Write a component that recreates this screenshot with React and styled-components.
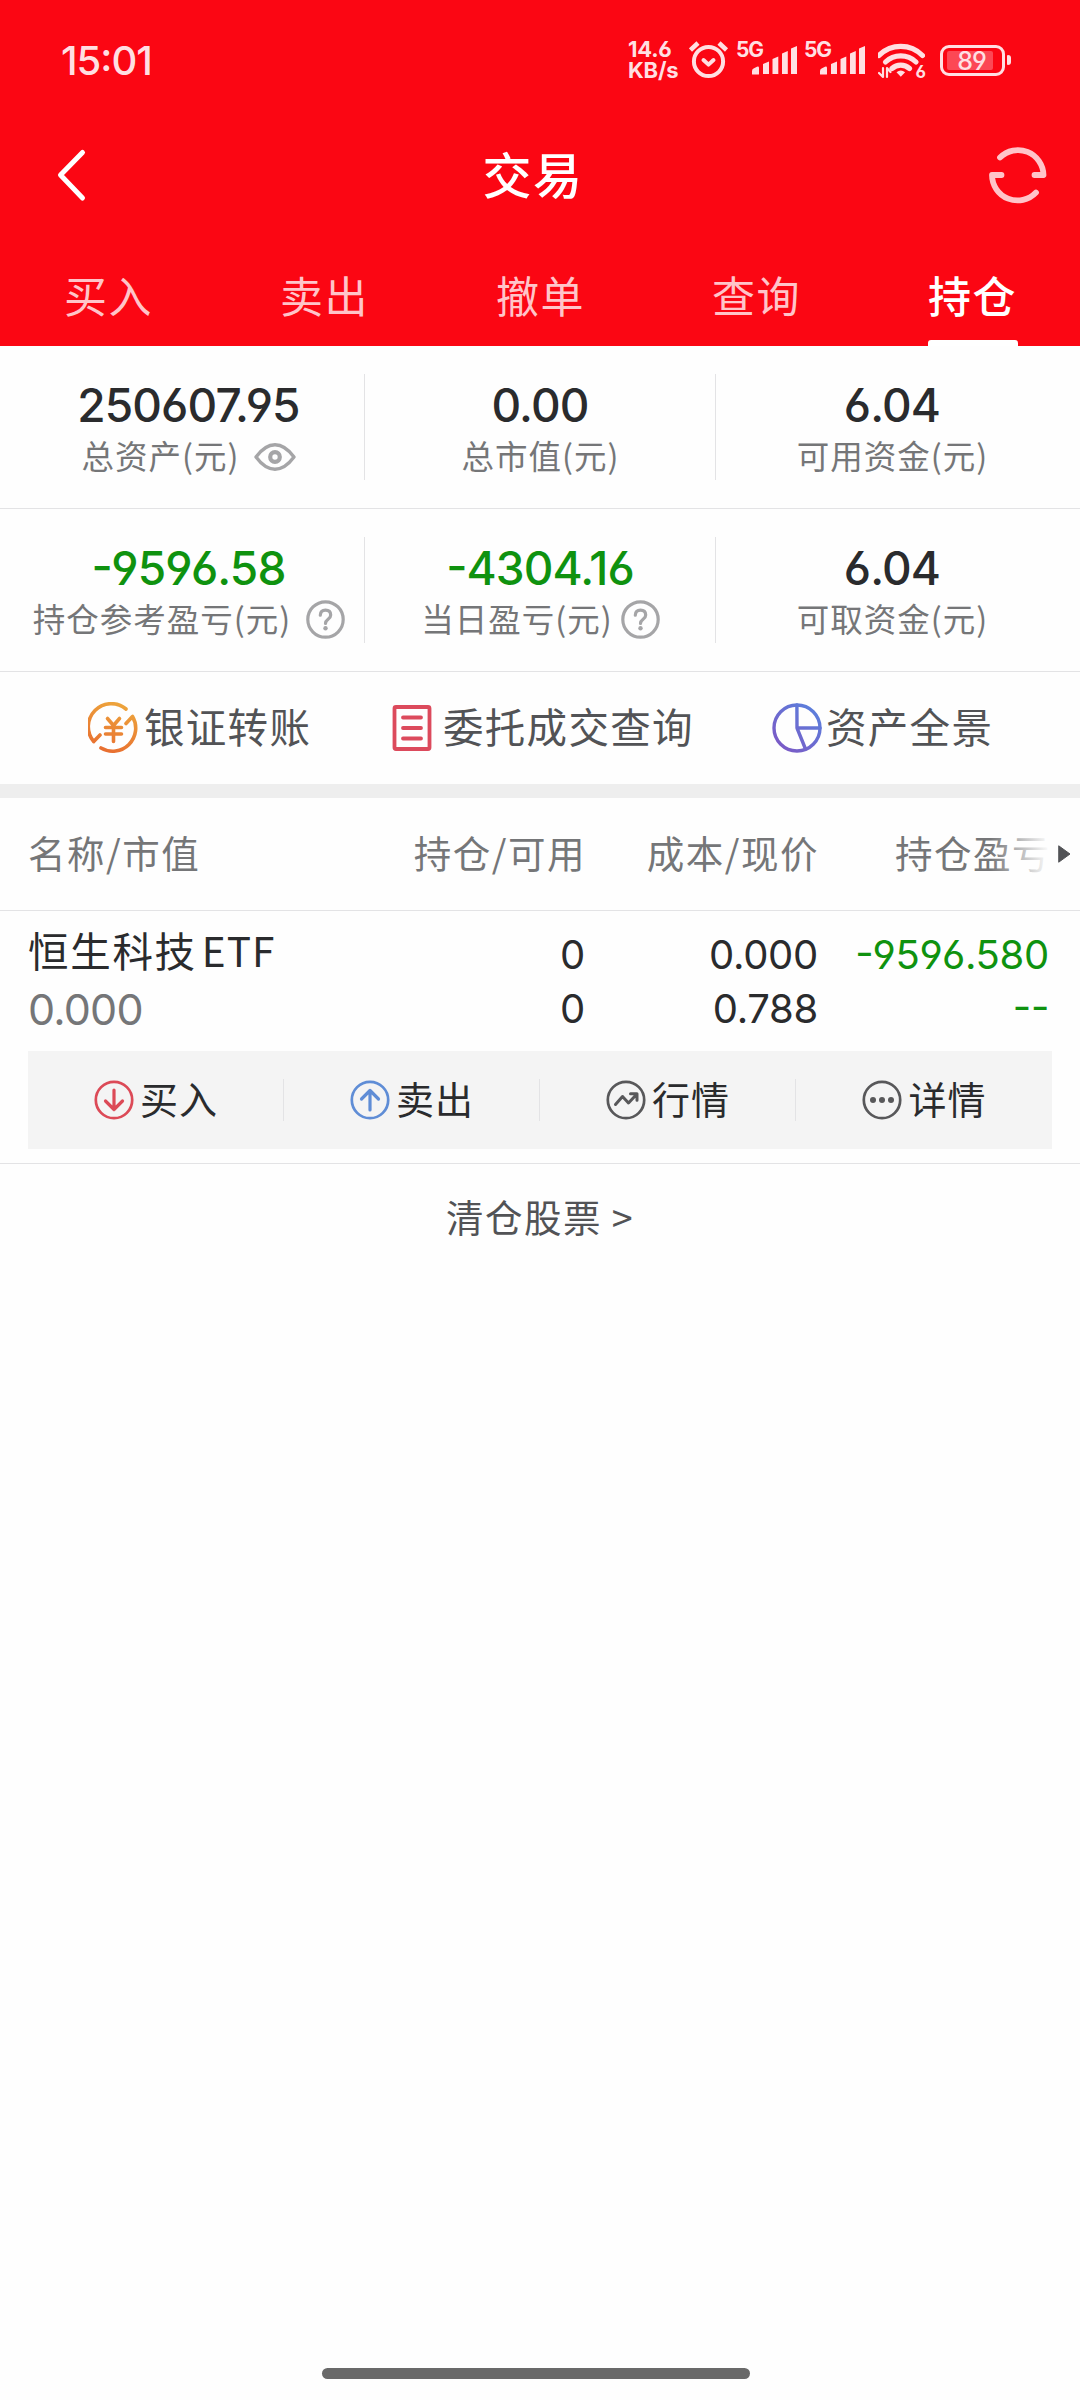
import React from 'react';
import styled, { createGlobalStyle } from 'styled-components';

const colors = {
  red: '#fb0613',
  pale: '#ffdfe2',
  rose: '#ffc4c9',
  ink: '#2a2b2d',
  dark: '#525356',
  grey: '#757678',
  icon: '#a5a5a7',
  line: '#e3e3e5',
  green: '#0f920f',
};

const GlobalStyle = createGlobalStyle`
  * {
    box-sizing: border-box;
  }
  body {
    margin: 0;
    background: #fefefe;
    font-family: 'Noto Sans CJK SC', sans-serif;
    color: ${colors.ink};
  }
  svg {
    display: block;
    flex: none;
    fill: none;
    stroke-linecap: round;
    stroke-linejoin: round;
  }
`;

const Page = styled.div`
  display: flex;
  flex-direction: column;
  width: 1080px;
  height: 2400px;
  white-space: nowrap;
`;

const Digits = styled.span`
  font-family: Inter, sans-serif;
  font-feature-settings: 'cv03', 'cv04', 'case';
`;

/* header */

const Header = styled.header`
  height: 346px;
  background: ${colors.red};
`;

const StatusBar = styled.div`
  display: flex;
  align-items: center;
  height: 120px;
  padding: 0 69px 0 61px;
  color: ${colors.pale};
  stroke: ${colors.pale};
`;

const Clock = styled(Digits)`
  flex: 1;
  font-size: 40px;
  font-weight: 500;
  letter-spacing: -1px;
`;

const NetSpeed = styled(Digits)`
  display: flex;
  flex-direction: column;
  width: 51px;
  margin-right: 10px;
  font-size: 22px;
  font-weight: 700;
  line-height: 21px;
  letter-spacing: -0.2px;
`;

const Signal = styled.div`
  position: relative;
  margin-left: ${(props) => props.$gap}px;
`;

const SignalLabel = styled(Digits)`
  position: absolute;
  top: 1px;
  left: 0;
  font-size: 21px;
  font-weight: 700;
  line-height: 17px;
  letter-spacing: -1.2px;
`;

const Wifi = styled.div`
  position: relative;
  margin: 0 15px 0 13px;
`;

const WifiLabel = styled(Digits)`
  position: absolute;
  right: -1px;
  bottom: 0;
  font-size: 17px;
  font-weight: 700;
  line-height: 15px;
`;

const Battery = styled.div`
  display: flex;
  align-items: center;
  gap: 2px;
  &::after {
    content: '';
    width: 4px;
    height: 10px;
    border-radius: 1px 3px 3px 1px;
    background: ${colors.pale};
  }
`;

const BatteryBody = styled.div`
  width: 65px;
  height: 31px;
  padding: 3px 9px 3px 4px;
  border: 3px solid ${colors.pale};
  border-radius: 9px;
`;

const BatteryLevel = styled(Digits)`
  display: block;
  height: 19px;
  padding-left: 3px;
  border-radius: 2px;
  background: #fc4855;
  font-size: 25px;
  font-weight: 500;
  line-height: 21px;
  text-align: center;
  letter-spacing: -1px;
`;

const NavBar = styled.div`
  display: flex;
  align-items: center;
  justify-content: space-between;
  height: 110px;
  padding: 0 32px 0 54px;
`;

const Title = styled.h1`
  margin: 0 12px 6px 0;
  color: #fff;
  font-size: 49px;
  font-weight: 500;
  letter-spacing: 1.5px;
`;

const Tabs = styled.nav`
  display: grid;
  grid-template-columns: repeat(5, 1fr);
  height: 116px;
`;

const Tab = styled.div`
  display: flex;
  flex-direction: column;
  align-items: center;
  justify-content: space-between;
  padding: 34px 0 0 1px;
  color: ${(props) => (props.$active ? '#fff' : colors.rose)};
  font-size: 43px;
  font-weight: ${(props) => (props.$active ? 500 : 400)};
  line-height: 60px;
  letter-spacing: 1.5px;
  &::after {
    content: '';
    width: 90px;
    height: 6px;
    border-radius: 3px 3px 0 0;
    background: ${(props) => (props.$active ? '#fff' : 'transparent')};
  }
`;

/* account summary */

const StatRow = styled.section`
  display: grid;
  grid-template-columns: 352px 351px 352px;
  height: 163px;
  padding: 28px 12px 0 13px;
  border-bottom: 1px solid ${colors.line};
`;

const StatCell = styled.div`
  display: flex;
  flex-direction: column;
  align-items: center;
  height: 106px;
  padding-top: 4px;
  border-right: 1px solid ${colors.line};
  &:last-child {
    border-right: 0;
  }
`;

const StatValue = styled(Digits)`
  color: ${(props) => (props.$loss ? colors.green : colors.ink)};
  font-size: 46px;
  font-weight: 450;
  line-height: 54px;
  letter-spacing: -0.9px;
`;

const StatLabel = styled.div`
  display: flex;
  align-items: center;
  gap: ${(props) => props.$gap || 0}px;
  padding-left: 1px;
  color: ${colors.grey};
  font-size: 32.5px;
  line-height: 46px;
  letter-spacing: 1px;
  svg {
    margin-top: 3px;
  }
`;

const Shortcuts = styled.section`
  display: grid;
  grid-template-columns: 299px 385px 1fr;
  align-items: center;
  height: 126px;
  padding-left: 88px;
  border-bottom: 14px solid #eee;
`;

const Shortcut = styled.div`
  display: flex;
  align-items: center;
  gap: ${(props) => props.$gap}px;
  color: ${colors.dark};
  font-size: 40.5px;
  line-height: 56px;
  letter-spacing: 1.3px;
`;

const ShortcutText = styled.span`
  margin-top: -4px;
`;

/* holdings */

const gridColumns = '557px 233px 231px';

const TableHead = styled.div`
  display: grid;
  position: relative;
  grid-template-columns: 230px 328px 233px 232px;
  height: 113px;
  padding: 27px 0 0 28px;
  border-bottom: 1px solid ${colors.line};
  color: ${colors.grey};
  font-size: 37.5px;
  line-height: 54px;
  letter-spacing: 1.5px;
`;

const HeadCell = styled.div`
  text-align: ${(props) => (props.$left ? 'left' : 'right')};
`;

const FadeOut = styled.div`
  display: flex;
  position: absolute;
  top: 20px;
  right: 0;
  align-items: center;
  width: 90px;
  height: 72px;
  padding-left: 66px;
  background: linear-gradient(to right, rgba(254, 254, 254, 0), #fefefe 60px);
`;

const Holding = styled.div`
  height: 253px;
  padding-top: 17px;
  border-bottom: 1px solid ${colors.line};
`;

const HoldingLine = styled.div`
  display: grid;
  grid-template-columns: ${gridColumns};
  height: 54px;
  padding-left: 28px;
  line-height: 54px;
`;

const NameCell = styled.div`
  display: grid;
  grid-template-columns: 1fr auto;
`;

const StockName = styled.span`
  margin-top: -5px;
  font-size: 40.5px;
  letter-spacing: 1.7px;
`;

const Ticker = styled.span`
  margin-left: 5px;
  letter-spacing: 1px;
`;

const MarketValue = styled(Digits)`
  color: ${colors.grey};
  font-size: 43px;
  letter-spacing: -0.8px;
`;

const Amount = styled(Digits)`
  color: ${(props) => (props.$loss ? colors.green : colors.ink)};
  font-size: 40px;
  text-align: right;
  letter-spacing: -0.3px;
`;

const ActionBar = styled.div`
  display: grid;
  grid-template-columns: repeat(4, 1fr);
  align-items: center;
  height: 98px;
  margin: 15px 28px 0;
  background: #f4f4f4;
`;

const Action = styled.div`
  display: flex;
  align-items: center;
  justify-content: center;
  gap: 6px;
  height: 42px;
  padding-left: 1px;
  border-right: 1px solid ${colors.line};
  font-size: 38px;
  line-height: 42px;
  letter-spacing: 1px;
  &:last-child {
    border-right: 0;
  }
`;

const ActionText = styled.span`
  margin-top: -4px;
`;

const ClearedLink = styled.div`
  padding-top: 25px;
  color: ${colors.dark};
  font-size: 37.5px;
  line-height: 54px;
  text-align: center;
  letter-spacing: 1.5px;
`;

const HomeIndicator = styled.div`
  width: 428px;
  height: 11px;
  margin: auto 0 21px 322px;
  border-radius: 6px;
  background: #696969;
`;

/* icons */

const AlarmIcon = () => (
  <svg width="40" height="40" viewBox="690 40 40 40" strokeWidth="4">
    <circle cx="709.5" cy="61.5" r="14.6" />
    <path d="M704.5 60l5 4.6 5-4.6" />
    <path d="M691.5 50l7.500-7M727.500 50l-7.500-7" strokeLinecap="butt" strokeWidth="4.500" />
  </svg>
);

const SignalIcon = () => (
  <svg width="61" height="40" viewBox="737 40 61 40" fill={colors.pale} stroke="none">
    <path fill={colors.pale} d="M753 74v-3q0-2 2-2.800l3-1.400q2-.7 2 1.200v6q0 .6-.6.6h-5.800q-.6 0-.6-.6z" />
    <path fill={colors.pale} d="M764 74V64l6-2.500V74zM773.500 74V59l5.800-2.500V74zM783 74V53.500l5.800-2.500V74zM792 74V48.500l6-2.500V74z" />
  </svg>
);

const WifiIcon = () => (
  <svg width="47" height="40" viewBox="879 40 47 40" strokeWidth="5.200" strokeLinecap="butt">
    <path d="M880 55.500a30.500 30.500 0 0 1 43.500 0" />
    <path d="M886.500 62a22 22 0 0 1 30.500 0" />
    <path d="M893 68.500a13 13 0 0 1 17.500 0" />
    <path d="M897.500 72.200q4.300-3.500 8.600 0l-4.300 4.500z" fill={colors.pale} stroke="none" />
    <path d="M884 68v9l-4-4M888 77v-9l3.500 4" strokeWidth="2.200" />
  </svg>
);

const BackIcon = () => (
  <svg width="36" height="56" viewBox="54 147 36 56" stroke="#fff" strokeWidth="5">
    <path d="M82.500 152.500L60.500 175l22 23" />
  </svg>
);

const RefreshIcon = () => (
  <svg width="60" height="60" viewBox="988 145 60 60" stroke={colors.rose} strokeWidth="5.800">
    <path d="M1000 157.500a25.500 25.500 0 0 1 43.500 17.500h-9" />
    <path d="M1036 192.500a25.500 25.500 0 0 1-44-17.500h9.500" />
  </svg>
);

const EyeIcon = () => (
  <svg width="42" height="28" viewBox="0 0 42 28" stroke={colors.icon} strokeWidth="3.400">
    <path d="M2 14Q11 1.800 21 1.800T40 14Q31 26.200 21 26.200T2 14z" />
    <circle cx="21" cy="14" r="4.800" strokeWidth="4.200" />
  </svg>
);

const HelpIcon = () => (
  <svg width="39" height="39" viewBox="0 0 39 39" stroke={colors.icon} strokeWidth="3.200">
    <circle cx="19.500" cy="19.500" r="17.700" />
    <path d="M14.300 15.200q.2-5 5.200-5t5.200 4.800q0 2.400-2.600 4.300-2.600 2-2.600 4.200" />
    <circle cx="19.500" cy="28.300" r="2.200" fill={colors.icon} stroke="none" />
  </svg>
);

const TransferIcon = () => (
  <svg width="50" height="52" viewBox="88 701.500 50 52" stroke="url(#transfer)" strokeWidth="3.600">
    <defs>
      <linearGradient id="transfer" gradientUnits="userSpaceOnUse" x1="122" y1="702" x2="104" y2="753">
        <stop offset="0" stopColor="#eda63c" />
        <stop offset="1" stopColor="#e86c30" />
      </linearGradient>
    </defs>
    <path d="M126 708.500a23 23 0 0 0-32.300 32.500l6.300-6.500" />
    <path d="M101 747.500a23 23 0 0 0 31.500-31.500l-6.500 7" />
    <path d="M107.500 718l6 7 6-7M113.500 725v16M105.500 727h16M105.500 733.500h16" />
  </svg>
);

const OrdersIcon = () => (
  <svg width="50" height="52" viewBox="387 702 50 52" stroke="#dc4a5c" strokeWidth="3.800">
    <rect x="394.500" y="707" width="35" height="42" rx="1.500" />
    <path d="M403 717.500h18M403 728h18M403 738.500h18" />
  </svg>
);

const PieIcon = () => (
  <svg width="50" height="52" viewBox="772 702 50 52" stroke="url(#pie)" strokeWidth="3.400">
    <defs>
      <linearGradient id="pie" gradientUnits="userSpaceOnUse" x1="815" y1="708" x2="780" y2="748">
        <stop offset="0" stopColor="#5b7fdc" />
        <stop offset="1" stopColor="#7b5ac6" />
      </linearGradient>
    </defs>
    <circle cx="797" cy="728" r="23" />
    <path d="M796.900 705l.1 23h23M797 728l8.500 21" />
  </svg>
);

const RoundIcon = ({ color, children }) => (
  <svg width="40" height="40" viewBox="0 0 40 40" stroke={color} strokeWidth="2.700">
    <circle cx="20" cy="20" r="18.200" />
    {children}
  </svg>
);

const BuyIcon = () => (
  <RoundIcon color="#dc4a57">
    <path d="M20 10v19.500M11.500 21l8.500 8.500 8.500-8.500" strokeWidth="3.200" />
  </RoundIcon>
);

const SellIcon = () => (
  <RoundIcon color="#5f8dd6">
    <path d="M20 30v-19.500M11.500 19l8.500-8.500 8.500 8.500" strokeWidth="3.200" />
  </RoundIcon>
);

const QuoteIcon = () => (
  <RoundIcon color="#58585a">
    <path d="M9.500 24.500l7-8 6 6.500 7.500-8M24.500 13.800h6.500v6.500" strokeWidth="3" />
  </RoundIcon>
);

const DetailIcon = () => (
  <RoundIcon color="#58585a">
    {[11, 20, 29].map((cx) => (
      <circle key={cx} cx={cx} cy="20" r="3" fill="#58585a" stroke="none" />
    ))}
  </RoundIcon>
);

const tabs = ['买入', '卖出', '撤单', '查询', '持仓'];

const stats = [
  [
    { value: '250607.95', label: '总资产(元)', icon: <EyeIcon />, gap: 15 },
    { value: '0.00', label: '总市值(元)' },
    { value: '6.04', label: '可用资金(元)' },
  ],
  [
    { value: '-9596.58', label: '持仓参考盈亏(元)', icon: <HelpIcon />, gap: 15, loss: true },
    { value: '-4304.16', label: '当日盈亏(元)', icon: <HelpIcon />, gap: 8, loss: true },
    { value: '6.04', label: '可取资金(元)' },
  ],
];

const shortcuts = [
  { label: '银证转账', icon: <TransferIcon />, gap: 6 },
  { label: '委托成交查询', icon: <OrdersIcon />, gap: 6 },
  { label: '资产全景', icon: <PieIcon />, gap: 4 },
];

const actions = [
  { label: '买入', icon: <BuyIcon /> },
  { label: '卖出', icon: <SellIcon /> },
  { label: '行情', icon: <QuoteIcon /> },
  { label: '详情', icon: <DetailIcon /> },
];

const App = () => (
  <Page>
    <GlobalStyle />
    <Header>
      <StatusBar>
        <Clock>15:01</Clock>
        <NetSpeed>
          <span>14.6</span>
          <span>KB/s</span>
        </NetSpeed>
        <AlarmIcon />
        {[7, 7].map((gap, i) => (
          <Signal key={i} $gap={gap}>
            <SignalLabel>5G</SignalLabel>
            <SignalIcon />
          </Signal>
        ))}
        <Wifi>
          <WifiIcon />
          <WifiLabel>6</WifiLabel>
        </Wifi>
        <Battery>
          <BatteryBody>
            <BatteryLevel>89</BatteryLevel>
          </BatteryBody>
        </Battery>
      </StatusBar>
      <NavBar>
        <BackIcon />
        <Title>交易</Title>
        <RefreshIcon />
      </NavBar>
      <Tabs>
        {tabs.map((tab) => (
          <Tab key={tab} $active={tab === '持仓'}>
            {tab}
          </Tab>
        ))}
      </Tabs>
    </Header>

    {stats.map((row, i) => (
      <StatRow key={i}>
        {row.map(({ value, label, icon, gap, loss }) => (
          <StatCell key={label}>
            <StatValue $loss={loss}>{value}</StatValue>
            <StatLabel $gap={gap}>
              {label}
              {icon}
            </StatLabel>
          </StatCell>
        ))}
      </StatRow>
    ))}

    <Shortcuts>
      {shortcuts.map(({ label, icon, gap }) => (
        <Shortcut key={label} $gap={gap}>
          {icon}
          <ShortcutText>{label}</ShortcutText>
        </Shortcut>
      ))}
    </Shortcuts>

    <TableHead>
      <HeadCell $left>名称/市值</HeadCell>
      <HeadCell>持仓/可用</HeadCell>
      <HeadCell>成本/现价</HeadCell>
      <HeadCell>持仓盈亏</HeadCell>
      <FadeOut>
        <svg width="16" height="20" viewBox="0 0 16 20">
          <path d="M3 2l11 8-11 8z" fill={colors.dark} stroke={colors.dark} />
        </svg>
      </FadeOut>
    </TableHead>

    <Holding>
      <HoldingLine>
        <NameCell>
          <StockName>
            恒生科技<Ticker>ETF</Ticker>
          </StockName>
          <Amount>0</Amount>
        </NameCell>
        <Amount>0.000</Amount>
        <Amount $loss>-9596.580</Amount>
      </HoldingLine>
      <HoldingLine>
        <NameCell>
          <MarketValue>0.000</MarketValue>
          <Amount>0</Amount>
        </NameCell>
        <Amount>0.788</Amount>
        <Amount $loss>--</Amount>
      </HoldingLine>
      <ActionBar>
        {actions.map(({ label, icon }) => (
          <Action key={label}>
            {icon}
            <ActionText>{label}</ActionText>
          </Action>
        ))}
      </ActionBar>
    </Holding>

    <ClearedLink>清仓股票 &gt;</ClearedLink>
    <HomeIndicator />
  </Page>
);

export default App;
